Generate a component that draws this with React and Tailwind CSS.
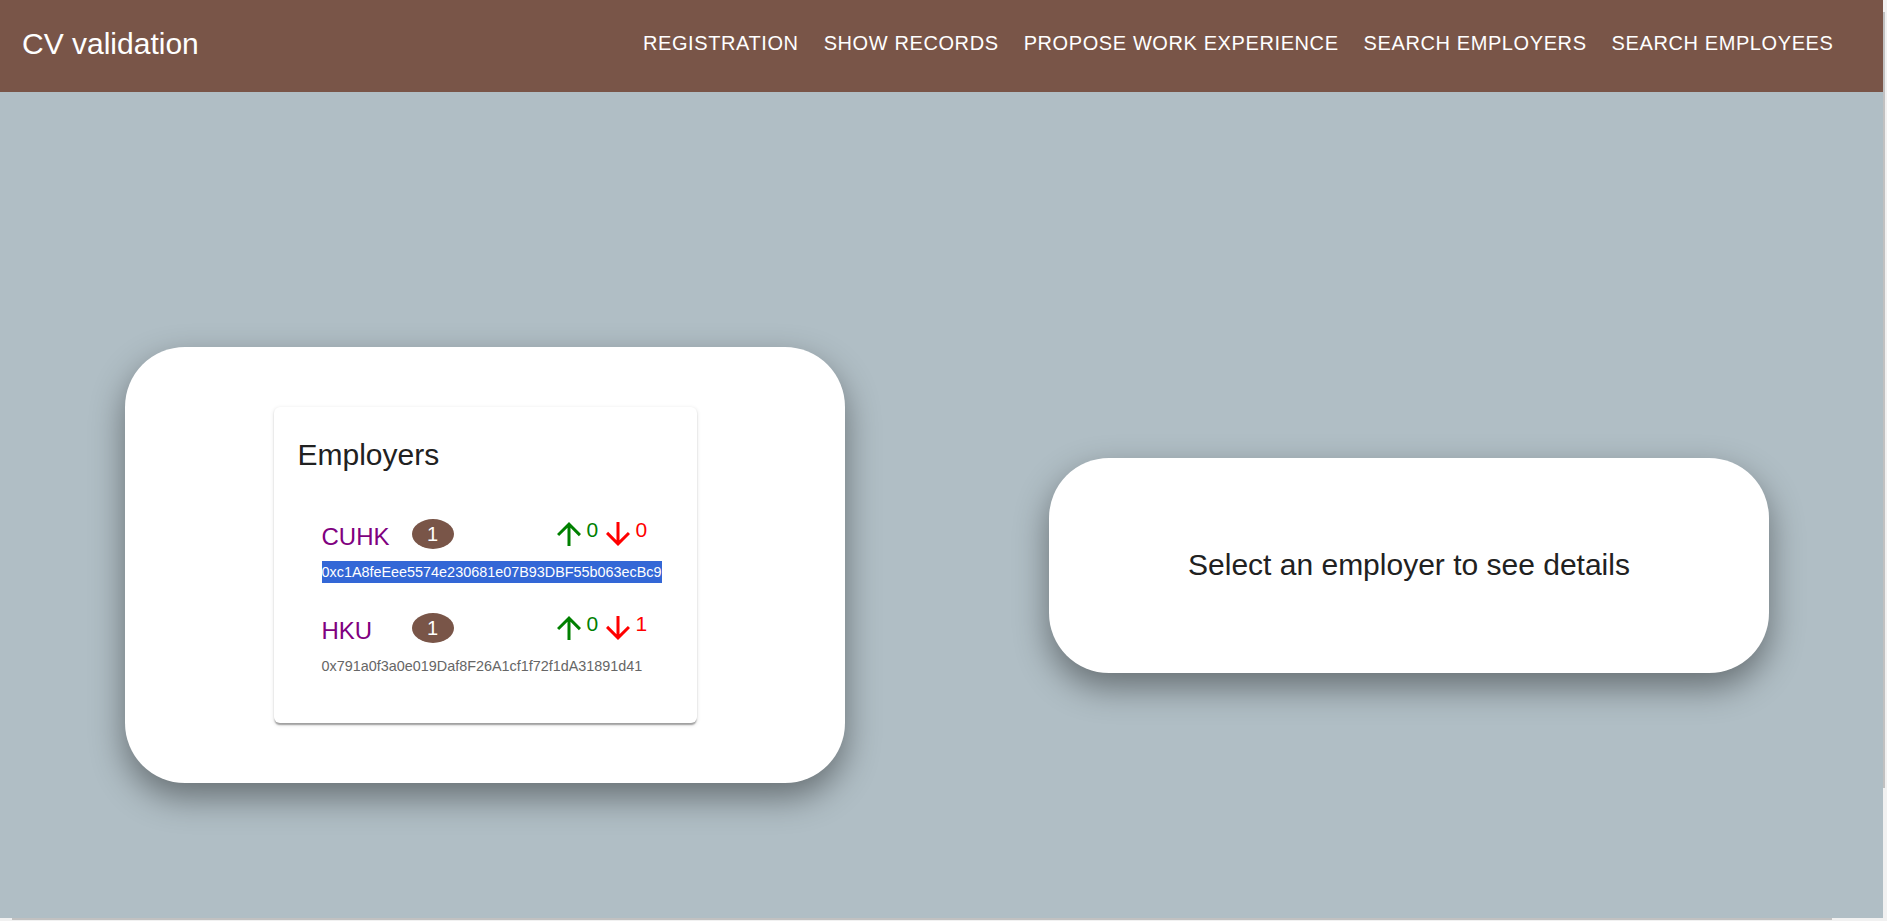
import React from "react";

const navItems = [
  "Registration",
  "Show Records",
  "Propose Work Experience",
  "Search Employers",
  "Search Employees",
];

const employers = [
  { name: "CUHK", count: 1, up: 0, down: 0, address: "0xc1A8feEee5574e230681e07B93DBF55b063ecBc9", selected: true },
  { name: "HKU", count: 1, up: 0, down: 1, address: "0x791a0f3a0e019Daf8F26A1cf1f72f1dA31891d41", selected: false },
];

const ArrowUp = ({ className }) => (
  <svg viewBox="0 0 24 24" className={className} fill="currentColor">
    <path d="M4 12l1.41 1.41L11 7.83V20h2V7.83l5.58 5.59L20 12l-8-8-8 8z" />
  </svg>
);

const ArrowDown = ({ className }) => (
  <svg viewBox="0 0 24 24" className={className} fill="currentColor">
    <path d="M20 12l-1.41-1.41L13 16.17V4h-2v12.17l-5.58-5.59L4 12l8 8 8-8z" />
  </svg>
);

const EmployerItem = ({ employer, first }) => (
  <li className={`px-[24px] ${first ? "" : "mt-[27px]"}`}>
    <div className="flex items-center h-[36px]">
      <span className="w-[90px] mt-[6px] text-[24px] leading-[36px] text-[#800080]">{employer.name}</span>
      <span className="w-[42px] h-[30px] rounded-[50%] bg-[#795548] text-white text-[20px] flex items-center justify-center">
        {employer.count}
      </span>
      <div className="ml-auto flex items-start h-[36px]">
        <ArrowUp className="w-[36px] h-[36px] text-[#008000]" />
        <span className="w-[13px] text-[21px] leading-[28px] text-[#008000]">{employer.up}</span>
        <ArrowDown className="w-[36px] h-[36px] text-[#ff0000]" />
        <span className="w-[13px] text-[21px] leading-[28px] text-[#ff0000]">{employer.down}</span>
      </div>
    </div>
    <div className="mt-[9px] h-[22px] whitespace-nowrap text-[14.4px] leading-[22px]">
      {employer.selected ? (
        <span className="bg-[#3367d6] text-white inline-block leading-[22px]">{employer.address}</span>
      ) : (
        <span className="text-[#666666]">{employer.address}</span>
      )}
    </div>
  </li>
);

export default function App() {
  return (
    <div className="min-h-screen bg-[#b0bec5] font-['Liberation_Sans',Arial,sans-serif]">
      {/* App bar */}
      <header className="h-[92px] bg-[#795548] flex items-center pb-[6px] pl-[22px] pr-[41px] text-white">
        <h1 className="mt-[2px] text-[30px] leading-[36px]">CV validation</h1>
        <nav className="ml-auto flex">
          {navItems.map((item) => (
            <button
              key={item}
              className="px-[12.5px] py-[8px] uppercase text-[20px] leading-[28px] tracking-[0.6px] text-white"
            >
              {item}
            </button>
          ))}
        </nav>
      </header>

      {/* Main */}
      <main className="flex items-center pt-[255px] pl-[125px] gap-[204px]">
        <section className="w-[720px] h-[436px] bg-white rounded-[60px] shadow-[0_14px_34px_rgba(0,0,0,0.42)] flex items-center justify-center">
          <div className="w-[423px] bg-white rounded-[6px] pt-[24px] pb-[46px] shadow-[0_3px_1.5px_-1.5px_rgba(0,0,0,0.2),0_1.5px_1.5px_0_rgba(0,0,0,0.14),0_1.5px_4.5px_0_rgba(0,0,0,0.12)]">
            <h2 className="px-[24px] text-[30px] leading-[48px] text-[#212121]">Employers</h2>
            <ul className="mt-[37px] px-[24px]">
              {employers.map((e, i) => (
                <EmployerItem key={e.name} employer={e} first={i === 0} />
              ))}
            </ul>
          </div>
        </section>

        <section className="w-[720px] h-[215px] bg-white rounded-[60px] shadow-[0_14px_34px_rgba(0,0,0,0.42)] flex items-center justify-center">
          <p className="text-[30px] leading-[36px] text-[#212121]">Select an employer to see details</p>
        </section>
      </main>

      {/* window scrollbars */}
      <div className="fixed top-0 right-0 w-[4px] h-full bg-[#f1f1f1]">
        <div className="mt-[12px] w-[2px] h-[776px] bg-[#c1c1c1]" />
      </div>
      <div className="fixed bottom-0 left-0 w-full h-[3px] bg-[#f1f1f1]">
        <div className="ml-[12px] w-[1820px] h-[2px] bg-[#c1c1c1]" />
      </div>
    </div>
  );
}
